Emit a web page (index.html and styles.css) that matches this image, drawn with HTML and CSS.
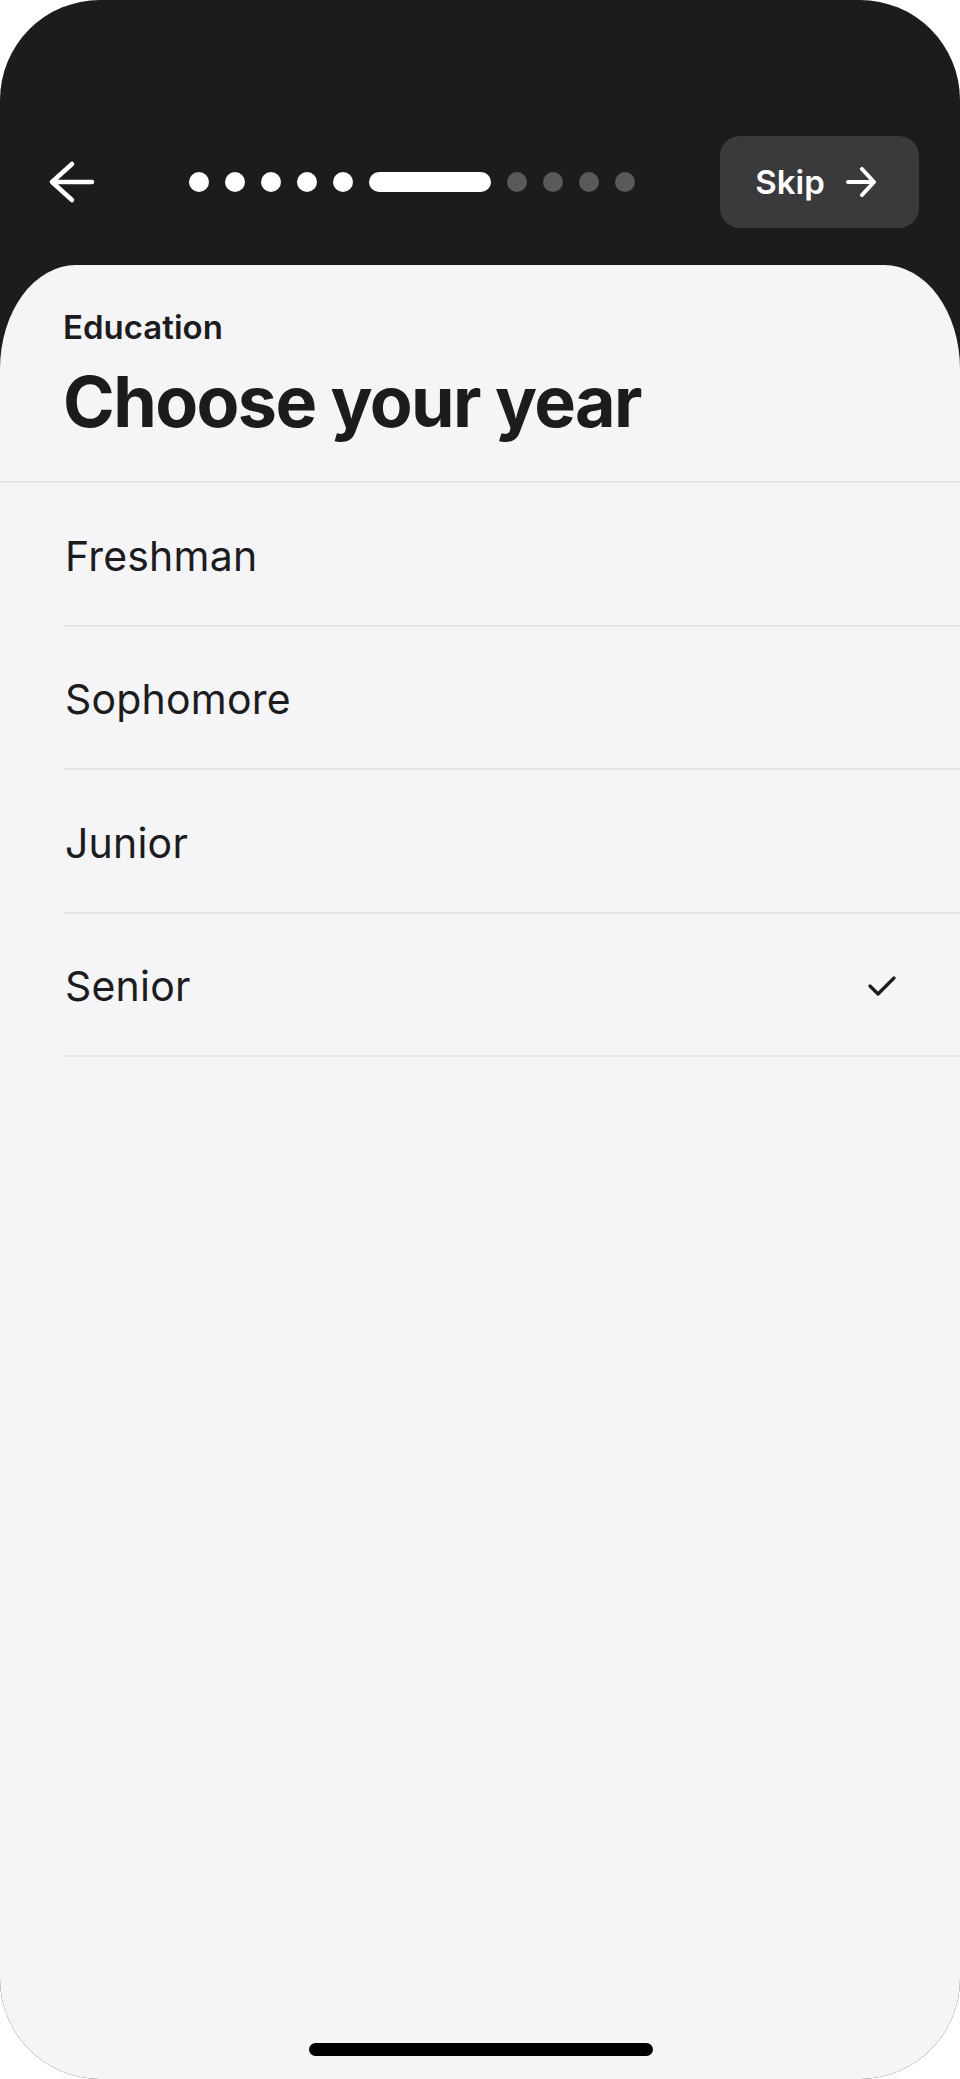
FILE: index.html
```html
<!DOCTYPE html>
<html lang="en">
<head>
  <meta charset="UTF-8" />
  <meta name="viewport" content="width=device-width, initial-scale=1.0" />
  <title>Choose your year</title>
  <link rel="stylesheet" href="styles.css">
</head>
<body>
  <div class="device">
    <div class="topbar">
      <div class="nav">
        <button class="back" aria-label="Back">
          <svg width="48" height="48" viewBox="0 0 48 48"><path d="M24 6 L4 24 L24 42 M4 24 L44 24" fill="none" stroke="#fff" stroke-width="4.5" stroke-linecap="round" stroke-linejoin="round"/></svg>
        </button>
        <div class="steps">
          <span class="dot done"></span>
          <span class="dot done"></span>
          <span class="dot done"></span>
          <span class="dot done"></span>
          <span class="dot done"></span>
          <span class="dot current"></span>
          <span class="dot"></span>
          <span class="dot"></span>
          <span class="dot"></span>
          <span class="dot"></span>
        </div>
        <button class="skip">Skip
          <svg width="30" height="30" viewBox="0 0 30 30"><path d="M16 2 L28 15 L16 28 M2 15 L28 15" fill="none" stroke="#fff" stroke-width="4" stroke-linecap="round" stroke-linejoin="round"/></svg>
        </button>
      </div>
    </div>
    <div class="sheet">
      <div class="heading">
        <div class="eyebrow">Education</div>
        <h1 class="title">Choose your year</h1>
      </div>
      <ul class="options">
        <li class="option">Freshman</li>
        <li class="option">Sophomore</li>
        <li class="option">Junior</li>
        <li class="option selected">Senior
          <svg class="check" width="28" height="20" viewBox="0 0 28 20"><path d="M2 10 L10 18 L26 2" fill="none" stroke="#1c1c1e" stroke-width="3.2" stroke-linecap="round" stroke-linejoin="round"/></svg>
        </li>
      </ul>
      <div class="home-indicator"></div>
    </div>
  </div>
</body>
</html>
```

FILE: styles.css
```css
* { box-sizing: border-box; }
html, body { margin: 0; padding: 0; background: #fff; font-family: Inter, "Noto Sans", Roboto, sans-serif; color: #1c1c1e; }
.device { width: 960px; height: 2079px; border-radius: 100px; overflow: hidden; background: #1c1c1e; display: flex; flex-direction: column; }

.topbar { height: 265px; padding-top: 136px; flex-shrink: 0; }
.nav { display: flex; align-items: center; height: 92px; padding: 0 41px 0 48px; }
.back { width: 48px; height: 48px; padding: 0; border: none; background: none; display: flex; align-items: center; justify-content: center; cursor: pointer; }
.steps { display: flex; align-items: center; gap: 16px; margin-left: 93px; }
.dot { width: 20px; height: 20px; border-radius: 10px; background: #5a5a5d; }
.dot.done { background: #fff; }
.dot.current { width: 122px; background: #fff; }
.skip { margin-left: auto; width: 199px; height: 92px; border: none; border-radius: 20px; background: #3a3a3c; color: #fff; font-family: inherit; font-size: 33px; font-weight: 600; display: flex; align-items: center; justify-content: center; gap: 21px; padding: 0 8px 0 0; cursor: pointer; }

.sheet { flex: 1; position: relative; background: #f5f5f7; border-radius: 76px 76px 0 0 / 104px 104px 0 0; }
.heading { padding: 42px 0 37px 63px; border-bottom: 2px solid #e6e6ea; }
.eyebrow { font-size: 33px; line-height: 40px; font-weight: 600; }
.title { margin: 13px 0 0; font-size: 70px; line-height: 84px; font-weight: 700; letter-spacing: -1.6px; }

.options { list-style: none; margin: 0 0 0 64px; padding: 0; }
.option { height: 143.5px; padding: 4px 64px 0 1px; border-bottom: 2px solid #e6e6ea; display: flex; align-items: center; justify-content: space-between; font-size: 41px; font-weight: 400; letter-spacing: 0.2px; }

.home-indicator { position: absolute; left: 309px; bottom: 23px; width: 344px; height: 13px; border-radius: 7px; background: #000; }
```
